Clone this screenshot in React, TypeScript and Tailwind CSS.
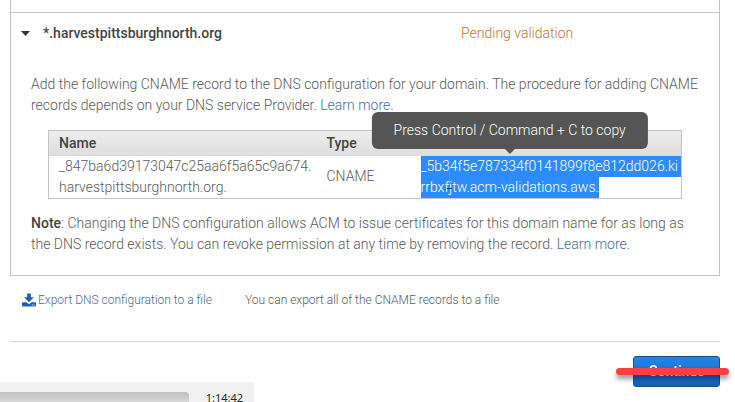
import type { ReactNode } from "react";

function LearnMore() {
  return (
    <a href="#learn" className="text-[#4a6a9c]">
      Learn more
    </a>
  );
}

function Tooltip({ children }: { children: ReactNode }) {
  return (
    <span
      role="tooltip"
      className="absolute bottom-full left-1/2 z-10 mb-7 -translate-x-1/2 rounded-md bg-[#555555] px-[22px] py-2 whitespace-nowrap text-white"
    >
      {children}
      <svg
        className="absolute top-full left-1/2 -translate-x-1/2"
        width="10"
        height="5"
        viewBox="0 0 10 5"
        aria-hidden="true"
      >
        <path d="M0 0h10L5 5z" fill="#555555" />
      </svg>
    </span>
  );
}

function TextCursor() {
  return (
    <svg
      className="absolute top-4 left-6"
      width="7"
      height="19"
      viewBox="0 0 7 19"
      fill="none"
      aria-hidden="true"
    >
      <path d="M4.500 0v18" stroke="#8a8a96" strokeOpacity="0.8" />
      <path d="M2 16.500h5" stroke="#1d3f78" />
    </svg>
  );
}

function RecordTable() {
  return (
    <table className="w-full table-fixed border border-[#c4c4c4] text-left">
      <thead>
        <tr className="h-[25px] bg-linear-to-b from-[#eeeeee] to-[#dddddd] text-[#444]">
          <th className="w-[268px] pl-[10px] font-medium">Name</th>
          <th className="w-[96px] pl-[10px] font-medium">Type</th>
          <th aria-label="Value" />
        </tr>
      </thead>
      <tbody>
        <tr>
          <td className="pl-[10px]">
            _847ba6d39173047c25aa6f5a65c9a674.
            <br />
            harvestpittsburghnorth.org.
          </td>
          <td className="pl-[10px]">CNAME</td>
          <td className="pl-[8px] text-white">
            <div className="relative flex flex-col items-start whitespace-nowrap">
              <span className="w-full bg-[#2b8cff]">_5b34f5e787334f0141899f8e812dd026.ki</span>
              <span className="relative bg-[#2b8cff]">
                rrbxfjtw.acm-validations.aws.
                <Tooltip>Press Control / Command + C to copy</Tooltip>
              </span>
              <TextCursor />
            </div>
          </td>
        </tr>
      </tbody>
    </table>
  );
}

function DownloadIcon() {
  return (
    <svg width="14" height="14" viewBox="0 0 15 14" fill="#1f63b5" aria-hidden="true">
      <path d="M5.500 0h4v4h3.300L7.500 9.300 2.200 4h3.300z" />
      <path
        fillRule="evenodd"
        d="M.8 9.500h4l1.700 1.200a1.400 1.400 0 0 0 2 0l1.700-1.200h4q.8 0 .8.800v2.900q0 .8-.8.800H.8q-.8 0-.8-.8v-2.900q0-.8.800-.8zM10.500 11.800v1h1v-1zm2 0v1h1v-1z"
      />
    </svg>
  );
}

export default function App() {
  return (
    <div className="overflow-hidden bg-white font-['Roboto','Liberation_Sans',sans-serif] text-sm leading-[21px] font-light text-[#5a5a5a]">
      <main className="ml-[10px] mr-[15px]">
        <section className="border-x border-b border-[#c4c4c4]">
          <div className="h-3" />
          <div className="border-t border-[#c4c4c4] pt-[10px] pr-[22px] pb-5 pl-[10px]">
            <div className="flex">
              <button type="button" className="flex w-[440px] items-center gap-[13px] font-medium text-[#444]">
                <svg width="9" height="5" viewBox="0 0 9 5" fill="#333" aria-hidden="true">
                  <path d="M0 0h9L4.500 5z" />
                </svg>
                *.harvestpittsburghnorth.org
              </button>
              <span className="text-[#b9772e]">Pending validation</span>
            </div>
            <div className="mt-[30px] pl-[10px]">
              <p className="whitespace-nowrap">
                Add the following CNAME record to the DNS configuration for your domain. The procedure for adding CNAME
                <br />
                records depends on your DNS service Provider. <LearnMore />.
              </p>
              <div className="mt-[14px] mr-[15px] ml-[17px]">
                <RecordTable />
              </div>
              <p className="mt-[14px] whitespace-nowrap">
                <strong className="font-medium text-[#444]">Note</strong>: Changing the DNS configuration allows ACM to
                issue certificates for this domain name for as long as
                <br />
                the DNS record exists. You can revoke permission at any time by removing the record. <LearnMore />.
              </p>
            </div>
          </div>
        </section>
        <div className="flex gap-[33px] border-b border-[#d6d6d6] pt-[14px] pr-3 pb-[30px] pl-3 text-xs leading-[21px]">
          <a href="#export" className="flex items-center gap-[2px] text-[#4a6a9c]">
            <DownloadIcon />
            Export DNS configuration to a file
          </a>
          <span>You can export all of the CNAME records to a file</span>
        </div>
      </main>
      <footer className="flex items-end justify-between pt-[14px] pr-[15px]">
        <div className="flex h-5 w-[254px] items-start justify-between bg-[#f1f1f1] pt-2 pr-[11px]">
          <div className="mt-[2px] h-[10px] w-[189px] rounded-tr-sm bg-linear-to-b from-[#c0c0c0] to-[#d8d8d8]" />
          <time className="font-['Noto_Sans',sans-serif] text-[11px] leading-4 font-normal text-[#222]">1:14:42</time>
        </div>
        <div className="relative mb-[15px]">
          <button
            type="button"
            className="h-[31px] w-[87px] rounded-[3px] border border-[#174f8c] bg-linear-to-b from-[#2585e8] to-[#1560b8] text-sm leading-7 font-medium text-white"
          >
            Continue
          </button>
          <div className="absolute -right-[9px] -left-[17px] top-[12px] h-[7px] rounded-full bg-[#ff4040] shadow-[0_4px_5px_rgba(0,0,0,0.4)]" />
        </div>
      </footer>
    </div>
  );
}
